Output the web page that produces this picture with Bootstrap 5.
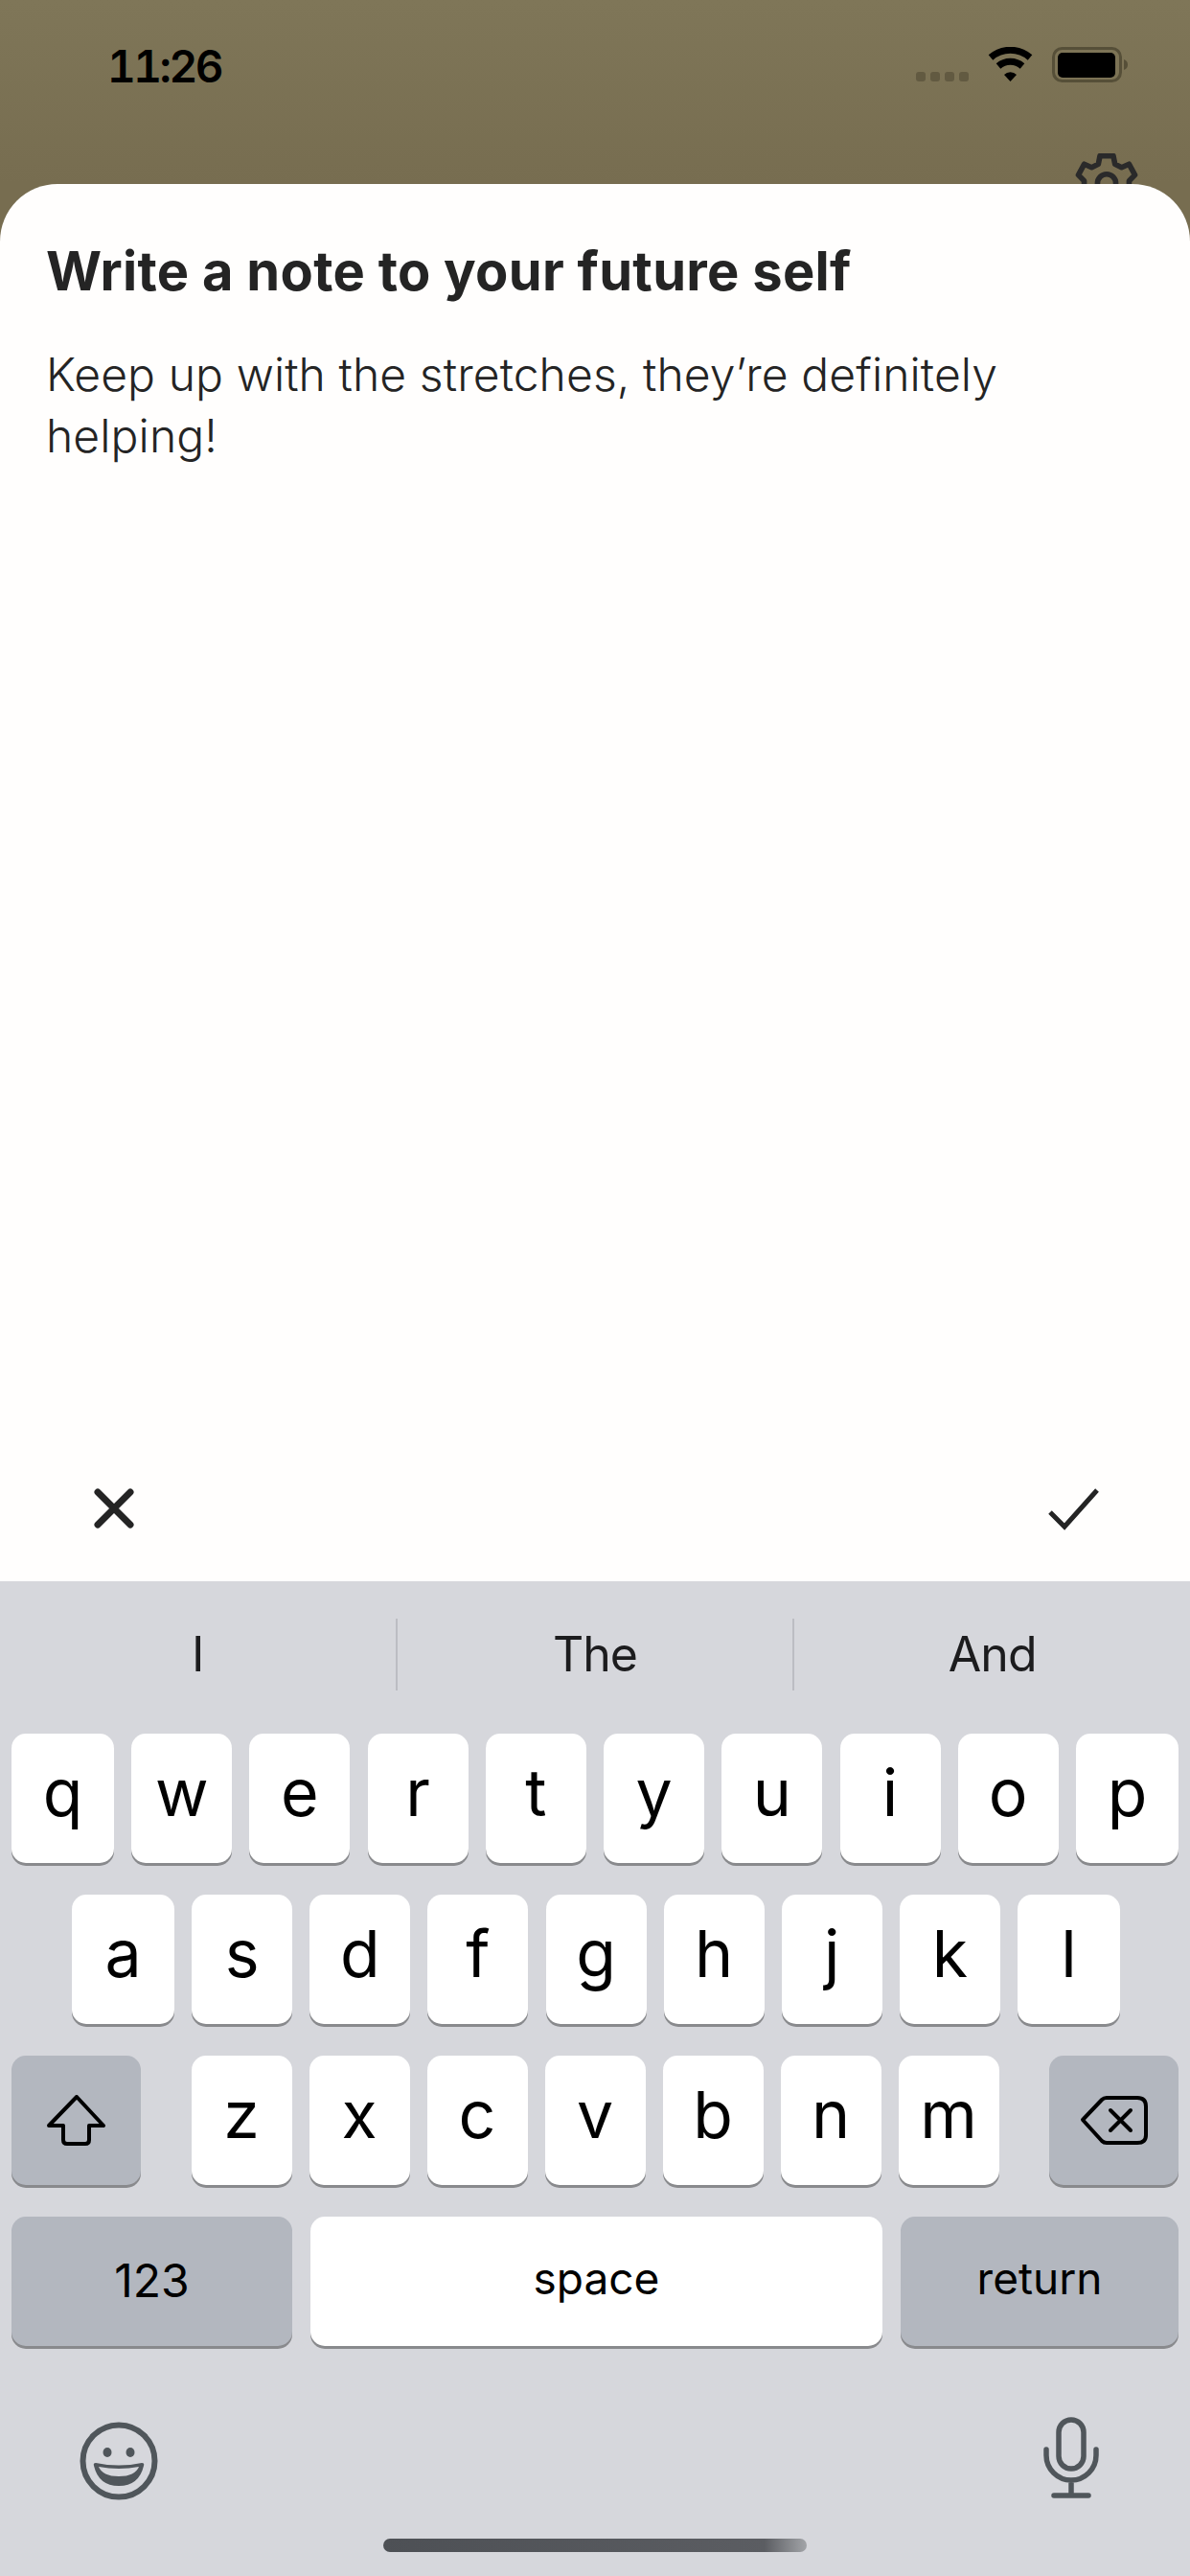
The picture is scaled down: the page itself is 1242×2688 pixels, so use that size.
<!DOCTYPE html>
<html lang="en">
<head>
  <meta charset="UTF-8">
  <meta name="viewport" content="width=device-width, initial-scale=1">
  <title>Write a note</title>
  <link href="https://cdn.jsdelivr.net/npm/bootstrap@5.3.0/dist/css/bootstrap.min.css" rel="stylesheet">
  <style>
    html, body { margin: 0; }
    .phone { width: 1242px; height: 2688px; overflow: hidden; background: linear-gradient(#7f7658, #776d50 192px); font-family: Inter, "Liberation Sans", sans-serif; }

    .top-area { height: 192px; overflow: hidden; }
    .status-bar { height: 160px; padding: 0 64px 0 112px; }
    .clock { font-size: 46px; font-weight: 600; color: #000; line-height: 1; margin-top: 46px; font-variant-numeric: tabular-nums; letter-spacing: -2.5px; }
    .status-icons { margin-top: 49px; }
    .gear-row { padding-right: 54px; }

    .sheet { flex: 1 1 0; background: #fffefd; border-radius: 60px 60px 0 0; color: #242424; padding: 0 48px; }
    .sheet-title { font-size: 56px; font-weight: 700; line-height: 66px; margin: 58px 0 0; color: #242424; letter-spacing: 0.3px; }
    .sheet-text { font-size: 48px; font-weight: 300; line-height: 64px; margin: 43px 0 0; color: #242424; letter-spacing: 0.1px; }
    .sheet-actions { height: 110px; }
    .act-close { margin: 13px 0 0 50px; }
    .act-done { margin: 12px 46px 0 0; }

    .keyboard { height: 1038px; background: #d6d7dc; padding-top: 39px; font-family: Inter, "Liberation Sans", sans-serif; color: #000; }
    .suggest-bar { height: 75px; }
    .suggest-item { flex: 1 1 0; font-size: 50px; color: #1c1c1e; line-height: 75px; text-align: center; letter-spacing: -1px; }
    .suggest-item + .suggest-item { border-left: 2px solid #bcbdc3; }
    .key-rows { margin-top: 45px; gap: 33px; }
    .key-row { height: 135px; }
    .row-top { padding: 0 12px; }
    .row-home { padding: 0 73px 0 75px; }
    .row-shift { padding: 0 12px; }
    .key-cap { width: 105px; height: 135px; border-radius: 15px; background: #fff; box-shadow: 0 3px 0 #898a8d; font-size: 68px; line-height: 1; padding-bottom: 14px; }
    .key-cap.edge { width: 107px; }
    .key-cap.dark { background: #b3b7bf; }
    .key-cap.wide { width: 135px; padding-bottom: 0; }
    .key-cap.num { width: 293px; font-size: 48px; padding-bottom: 2px; }
    .key-cap.spc { width: 597px; font-size: 46px; padding-bottom: 8px; }
    .key-cap.ret { width: 290px; font-size: 46px; padding-bottom: 8px; }
    .letters { gap: 18px; }
    .kb-tools { margin-top: 68px; padding: 0 74px; }
    .home-bar { width: 442px; height: 14px; margin: 33px auto 0; border-radius: 7px; background: linear-gradient(90deg, #4d5055 0%, #5b5d62 90%, #a2a4a8 100%); }
  </style>
</head>
<body>
  <div class="phone d-flex flex-column">

    <div class="top-area">
      <div class="status-bar d-flex justify-content-between align-items-start">
        <div class="clock">11:26</div>
        <div class="status-icons">
          <svg width="222" height="40" viewBox="957 49 222 40">
            <g fill="#625a41">
              <rect x="957" y="75" width="10" height="10" rx="3"/>
              <rect x="972" y="75" width="10" height="10" rx="3"/>
              <rect x="987" y="75" width="10" height="10" rx="3"/>
              <rect x="1002" y="75" width="10" height="10" rx="3"/>
            </g>
            <path d="M1035 60a31 31 0 0 1 41 0" fill="none" stroke="#000" stroke-width="7"/>
            <path d="M1043 69a19 19 0 0 1 25 0" fill="none" stroke="#000" stroke-width="7"/>
            <path d="M1049 78a9 9 0 0 1 13 0l-6.500 7z" fill="#000"/>
            <rect x="1100.500" y="50.500" width="70" height="34" rx="9" fill="none" stroke="#564f38" stroke-width="3"/>
            <rect x="1105" y="55" width="60" height="26" rx="5" fill="#000"/>
            <path d="M1174 62c3 1 4 3 4 5.500s-1 4.500-4 5.500z" fill="#564f38"/>
          </svg>
        </div>
      </div>
      <div class="gear-row d-flex justify-content-end">
        <svg width="66" height="66" viewBox="-3 0 76 76" fill="none" stroke="#2a2a2a" stroke-width="6.500" stroke-linejoin="round">
          <path d="M27 3h16l2 10 8 4 9-4 7 13-7 7v6l7 7-7 13-9-4-8 4-2 10H27l-2-10-8-4-9 4-7-13 7-7v-6l-7-7 7-13 9 4 8-4z"/>
          <circle cx="35" cy="36" r="11"/>
        </svg>
      </div>
    </div>

    <div class="sheet d-flex flex-column">
      <h1 class="sheet-title">Write a note to your future self</h1>
      <p class="sheet-text">Keep up with the stretches, they’re definitely helping!</p>
      <div class="sheet-actions mt-auto d-flex justify-content-between align-items-start">
        <svg class="act-close" width="42" height="42" viewBox="0 0 42 42" stroke="#242424" stroke-width="7" stroke-linecap="round"><path d="M4 4l34 34M38 4L4 38"/></svg>
        <svg class="act-done" width="54" height="46" viewBox="0 0 54 46" fill="none" stroke="#242424" stroke-width="5"><path d="M2 26l15 15L51 3"/></svg>
      </div>
    </div>

    <div class="keyboard">
      <div class="suggest-bar d-flex">
        <div class="suggest-item">I</div>
        <div class="suggest-item">The</div>
        <div class="suggest-item">And</div>
      </div>

      <div class="key-rows d-flex flex-column">
        <div class="key-row row-top d-flex justify-content-between">
          <div class="key-cap edge d-flex align-items-center justify-content-center">q</div>
          <div class="key-cap d-flex align-items-center justify-content-center">w</div>
          <div class="key-cap d-flex align-items-center justify-content-center">e</div>
          <div class="key-cap d-flex align-items-center justify-content-center">r</div>
          <div class="key-cap d-flex align-items-center justify-content-center">t</div>
          <div class="key-cap d-flex align-items-center justify-content-center">y</div>
          <div class="key-cap d-flex align-items-center justify-content-center">u</div>
          <div class="key-cap d-flex align-items-center justify-content-center">i</div>
          <div class="key-cap d-flex align-items-center justify-content-center">o</div>
          <div class="key-cap edge d-flex align-items-center justify-content-center">p</div>
        </div>
        <div class="key-row row-home d-flex justify-content-between">
          <div class="key-cap edge d-flex align-items-center justify-content-center">a</div>
          <div class="key-cap d-flex align-items-center justify-content-center">s</div>
          <div class="key-cap d-flex align-items-center justify-content-center">d</div>
          <div class="key-cap d-flex align-items-center justify-content-center">f</div>
          <div class="key-cap d-flex align-items-center justify-content-center">g</div>
          <div class="key-cap d-flex align-items-center justify-content-center">h</div>
          <div class="key-cap d-flex align-items-center justify-content-center">j</div>
          <div class="key-cap d-flex align-items-center justify-content-center">k</div>
          <div class="key-cap edge d-flex align-items-center justify-content-center">l</div>
        </div>
        <div class="key-row row-shift d-flex justify-content-between">
          <div class="key-cap wide dark d-flex align-items-center justify-content-center">
            <svg width="62" height="54" viewBox="51 187 62 54" fill="none" stroke="#000" stroke-width="4" stroke-linejoin="round"><path d="M82 189l28 30H95v15q0 4-4 4H72q-4 0-4-4v-15H53z"/></svg>
          </div>
          <div class="letters d-flex">
            <div class="key-cap d-flex align-items-center justify-content-center">z</div>
            <div class="key-cap d-flex align-items-center justify-content-center">x</div>
            <div class="key-cap d-flex align-items-center justify-content-center">c</div>
            <div class="key-cap d-flex align-items-center justify-content-center">v</div>
            <div class="key-cap d-flex align-items-center justify-content-center">b</div>
            <div class="key-cap d-flex align-items-center justify-content-center">n</div>
            <div class="key-cap d-flex align-items-center justify-content-center">m</div>
          </div>
          <div class="key-cap wide dark d-flex align-items-center justify-content-center">
            <svg width="72" height="52" viewBox="1128 2188 72 52" fill="none" stroke="#000" stroke-width="4" stroke-linejoin="round"><path d="M1131 2213l20-21q2-2 5-2h32q9 0 9 9v30q0 8-9 8h-32q-3 0-5-2z"/><path d="M1160 2203l21 21M1181 2203l-21 21" stroke-linecap="round"/></svg>
          </div>
        </div>
        <div class="key-row row-shift d-flex justify-content-between">
          <div class="key-cap num dark d-flex align-items-center justify-content-center">123</div>
          <div class="key-cap spc d-flex align-items-center justify-content-center">space</div>
          <div class="key-cap ret dark d-flex align-items-center justify-content-center">return</div>
        </div>
      </div>

      <div class="kb-tools d-flex justify-content-between">
        <svg width="100" height="100" viewBox="74 2516 100 100">
          <circle cx="124" cy="2568" r="37.500" fill="none" stroke="#50565b" stroke-width="6"/>
          <ellipse cx="112" cy="2559" rx="4.500" ry="5" fill="#50565b"/>
          <ellipse cx="136" cy="2559" rx="4.500" ry="5" fill="#50565b"/>
          <path d="M100 2570q24 5 48 0q3 0 2 3q-5 21-26 21t-26-21q-1-3 2-3z" fill="#50565b"/>
          <path d="M103 2574q21 4 42 0q-4 10-21 10t-21-10z" fill="#d6d7dc"/>
        </svg>
        <svg width="100" height="100" viewBox="1068 2516 100 100" fill="none" stroke="#50565b" stroke-width="5.500" stroke-linecap="round">
          <rect x="1105" y="2525" width="26" height="51" rx="13"/>
          <path d="M1092 2556v6a26 26 0 0 0 52 0v-6M1118 2588v16M1100 2604h36"/>
        </svg>
      </div>

      <div class="home-bar"></div>
    </div>
  </div>

  <script src="https://cdn.jsdelivr.net/npm/bootstrap@5.3.0/dist/js/bootstrap.bundle.min.js"></script>
</body>
</html>
